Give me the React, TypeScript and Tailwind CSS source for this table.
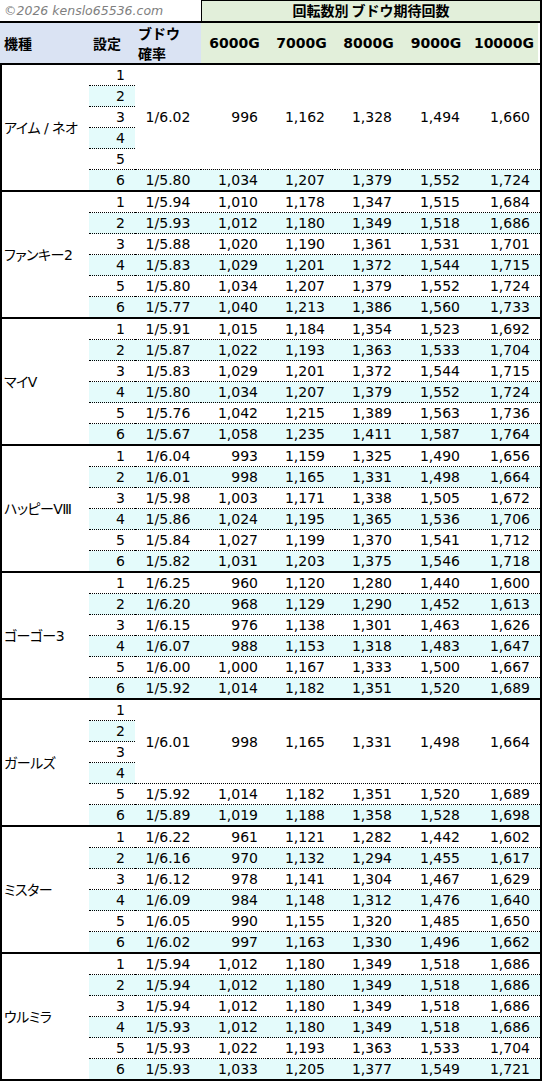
import React from 'react';

interface Kishu {
  name: string;
  merge: number; // 先頭何行を結合するか (0 = なし)
  rows: string[][]; // [確率, 6000G, 7000G, 8000G, 9000G, 10000G]
}

const data: Kishu[] = [
  {
    name: 'アイム / ネオ',
    merge: 5,
    rows: [
      ['1/6.02', '996', '1,162', '1,328', '1,494', '1,660'],
      ['1/5.80', '1,034', '1,207', '1,379', '1,552', '1,724'],
    ],
  },
  {
    name: 'ファンキー2',
    merge: 0,
    rows: [
      ['1/5.94', '1,010', '1,178', '1,347', '1,515', '1,684'],
      ['1/5.93', '1,012', '1,180', '1,349', '1,518', '1,686'],
      ['1/5.88', '1,020', '1,190', '1,361', '1,531', '1,701'],
      ['1/5.83', '1,029', '1,201', '1,372', '1,544', '1,715'],
      ['1/5.80', '1,034', '1,207', '1,379', '1,552', '1,724'],
      ['1/5.77', '1,040', '1,213', '1,386', '1,560', '1,733'],
    ],
  },
  {
    name: 'マイV',
    merge: 0,
    rows: [
      ['1/5.91', '1,015', '1,184', '1,354', '1,523', '1,692'],
      ['1/5.87', '1,022', '1,193', '1,363', '1,533', '1,704'],
      ['1/5.83', '1,029', '1,201', '1,372', '1,544', '1,715'],
      ['1/5.80', '1,034', '1,207', '1,379', '1,552', '1,724'],
      ['1/5.76', '1,042', '1,215', '1,389', '1,563', '1,736'],
      ['1/5.67', '1,058', '1,235', '1,411', '1,587', '1,764'],
    ],
  },
  {
    name: 'ハッピーVⅢ',
    merge: 0,
    rows: [
      ['1/6.04', '993', '1,159', '1,325', '1,490', '1,656'],
      ['1/6.01', '998', '1,165', '1,331', '1,498', '1,664'],
      ['1/5.98', '1,003', '1,171', '1,338', '1,505', '1,672'],
      ['1/5.86', '1,024', '1,195', '1,365', '1,536', '1,706'],
      ['1/5.84', '1,027', '1,199', '1,370', '1,541', '1,712'],
      ['1/5.82', '1,031', '1,203', '1,375', '1,546', '1,718'],
    ],
  },
  {
    name: 'ゴーゴー3',
    merge: 0,
    rows: [
      ['1/6.25', '960', '1,120', '1,280', '1,440', '1,600'],
      ['1/6.20', '968', '1,129', '1,290', '1,452', '1,613'],
      ['1/6.15', '976', '1,138', '1,301', '1,463', '1,626'],
      ['1/6.07', '988', '1,153', '1,318', '1,483', '1,647'],
      ['1/6.00', '1,000', '1,167', '1,333', '1,500', '1,667'],
      ['1/5.92', '1,014', '1,182', '1,351', '1,520', '1,689'],
    ],
  },
  {
    name: 'ガールズ',
    merge: 4,
    rows: [
      ['1/6.01', '998', '1,165', '1,331', '1,498', '1,664'],
      ['1/5.92', '1,014', '1,182', '1,351', '1,520', '1,689'],
      ['1/5.89', '1,019', '1,188', '1,358', '1,528', '1,698'],
    ],
  },
  {
    name: 'ミスター',
    merge: 0,
    rows: [
      ['1/6.22', '961', '1,121', '1,282', '1,442', '1,602'],
      ['1/6.16', '970', '1,132', '1,294', '1,455', '1,617'],
      ['1/6.12', '978', '1,141', '1,304', '1,467', '1,629'],
      ['1/6.09', '984', '1,148', '1,312', '1,476', '1,640'],
      ['1/6.05', '990', '1,155', '1,320', '1,485', '1,650'],
      ['1/6.02', '997', '1,163', '1,330', '1,496', '1,662'],
    ],
  },
  {
    name: 'ウルミラ',
    merge: 0,
    rows: [
      ['1/5.94', '1,012', '1,180', '1,349', '1,518', '1,686'],
      ['1/5.94', '1,012', '1,180', '1,349', '1,518', '1,686'],
      ['1/5.94', '1,012', '1,180', '1,349', '1,518', '1,686'],
      ['1/5.93', '1,012', '1,180', '1,349', '1,518', '1,686'],
      ['1/5.93', '1,022', '1,193', '1,363', '1,533', '1,704'],
      ['1/5.93', '1,033', '1,205', '1,377', '1,549', '1,721'],
    ],
  },
];

const spanCls: Record<number, string> = { 4: 'row-span-4', 5: 'row-span-5' };
const cyan = 'bg-[#e4fbfb]';

function Group({ g }: { g: Kishu }) {
  const cells: React.ReactNode[] = [];
  cells.push(
    <div key="name" className="row-span-6 flex items-center pl-[2px] [font-feature-settings:'palt'] tracking-[-0.5px]">
      {g.name}
    </div>
  );

  for (let i = 0; i < 6; i++) {
    const even = i % 2 === 1;
    const rowCls = i === 5 ? 'h-[20px]' : 'h-[21px] border-b border-dotted border-black';
    const bg = even ? cyan : '';
    cells.push(
      <div key={`s${i}`} className={`${rowCls} ${bg} text-right pr-[10px]`}>
        {i + 1}
      </div>
    );

    if (g.merge && i < g.merge) {
      if (i === 0) {
        const r = g.rows[0];
        cells.push(
          <div key="mp" className={`${spanCls[g.merge]} border-b border-dotted border-black flex items-center justify-center`}>
            {r[0]}
          </div>
        );
        r.slice(1).forEach((v, j) => {
          cells.push(
            <div key={`m${j}`} className={`${spanCls[g.merge]} border-b border-dotted border-black flex items-center justify-end pr-[10px]`}>
              {v}
            </div>
          );
        });
      }
      continue;
    }

    const r = g.merge ? g.rows[i - g.merge + 1] : g.rows[i];
    cells.push(
      <div key={`p${i}`} className={`${rowCls} ${bg} text-center`}>
        {r[0]}
      </div>
    );
    r.slice(1).forEach((v, j) => {
      cells.push(
        <div key={`v${i}-${j}`} className={`${rowCls} ${bg} text-right pr-[10px]`}>
          {v}
        </div>
      );
    });
  }

  return (
    <div className="grid grid-cols-[87px_46px_66px_67px_67px_67px_68px_70px] border-l-2 border-r-2 border-b-2 border-black leading-[20px]">
      {cells}
    </div>
  );
}

export default function App() {
  return (
    <div className="w-[542px] bg-white text-black text-[14px] font-['DejaVu_Sans','Noto_Sans_CJK_JP',sans-serif]">
      {/* タイトル行 */}
      <div className="flex h-[23px] border-b-2 border-black">
        <div className="w-[201px] pl-[4px] pt-[2px] text-[12.5px] italic text-[#7f7f7f] leading-[18px]">
          ©2026 kenslo65536.com
        </div>
        <div className="flex-1 border-t border-l border-r-2 border-black bg-[#e2efda] text-center font-bold leading-[19px] font-['Noto_Sans_CJK_JP',sans-serif]">
          回転数別 ブドウ期待回数
        </div>
      </div>

      {/* 見出し行 */}
      <div className="flex h-[42px] border-b-2 border-r-2 border-black font-bold">
        <div className="w-[89px] bg-[#dae3f3] pl-[4px] flex items-center font-['Noto_Sans_CJK_JP',sans-serif]">機種</div>
        <div className="w-[46px] bg-[#dae3f3] pl-[4px] flex items-center font-['Noto_Sans_CJK_JP',sans-serif]">設定</div>
        <div className="w-[66px] bg-[#dae3f3] pl-[3px] flex flex-col justify-center leading-[20px] font-['Noto_Sans_CJK_JP',sans-serif]">
          <span>ブドウ</span>
          <span>確率</span>
        </div>
        <div className="w-[67px] bg-[#e2efda] flex items-center justify-center">6000G</div>
        <div className="w-[67px] bg-[#e2efda] flex items-center justify-center">7000G</div>
        <div className="w-[67px] bg-[#e2efda] flex items-center justify-center">8000G</div>
        <div className="w-[68px] bg-[#e2efda] flex items-center justify-center">9000G</div>
        <div className="w-[68px] bg-[#e2efda] flex items-center justify-center">10000G</div>
      </div>

      {data.map((g) => (
        <Group key={g.name} g={g} />
      ))}
    </div>
  );
}
